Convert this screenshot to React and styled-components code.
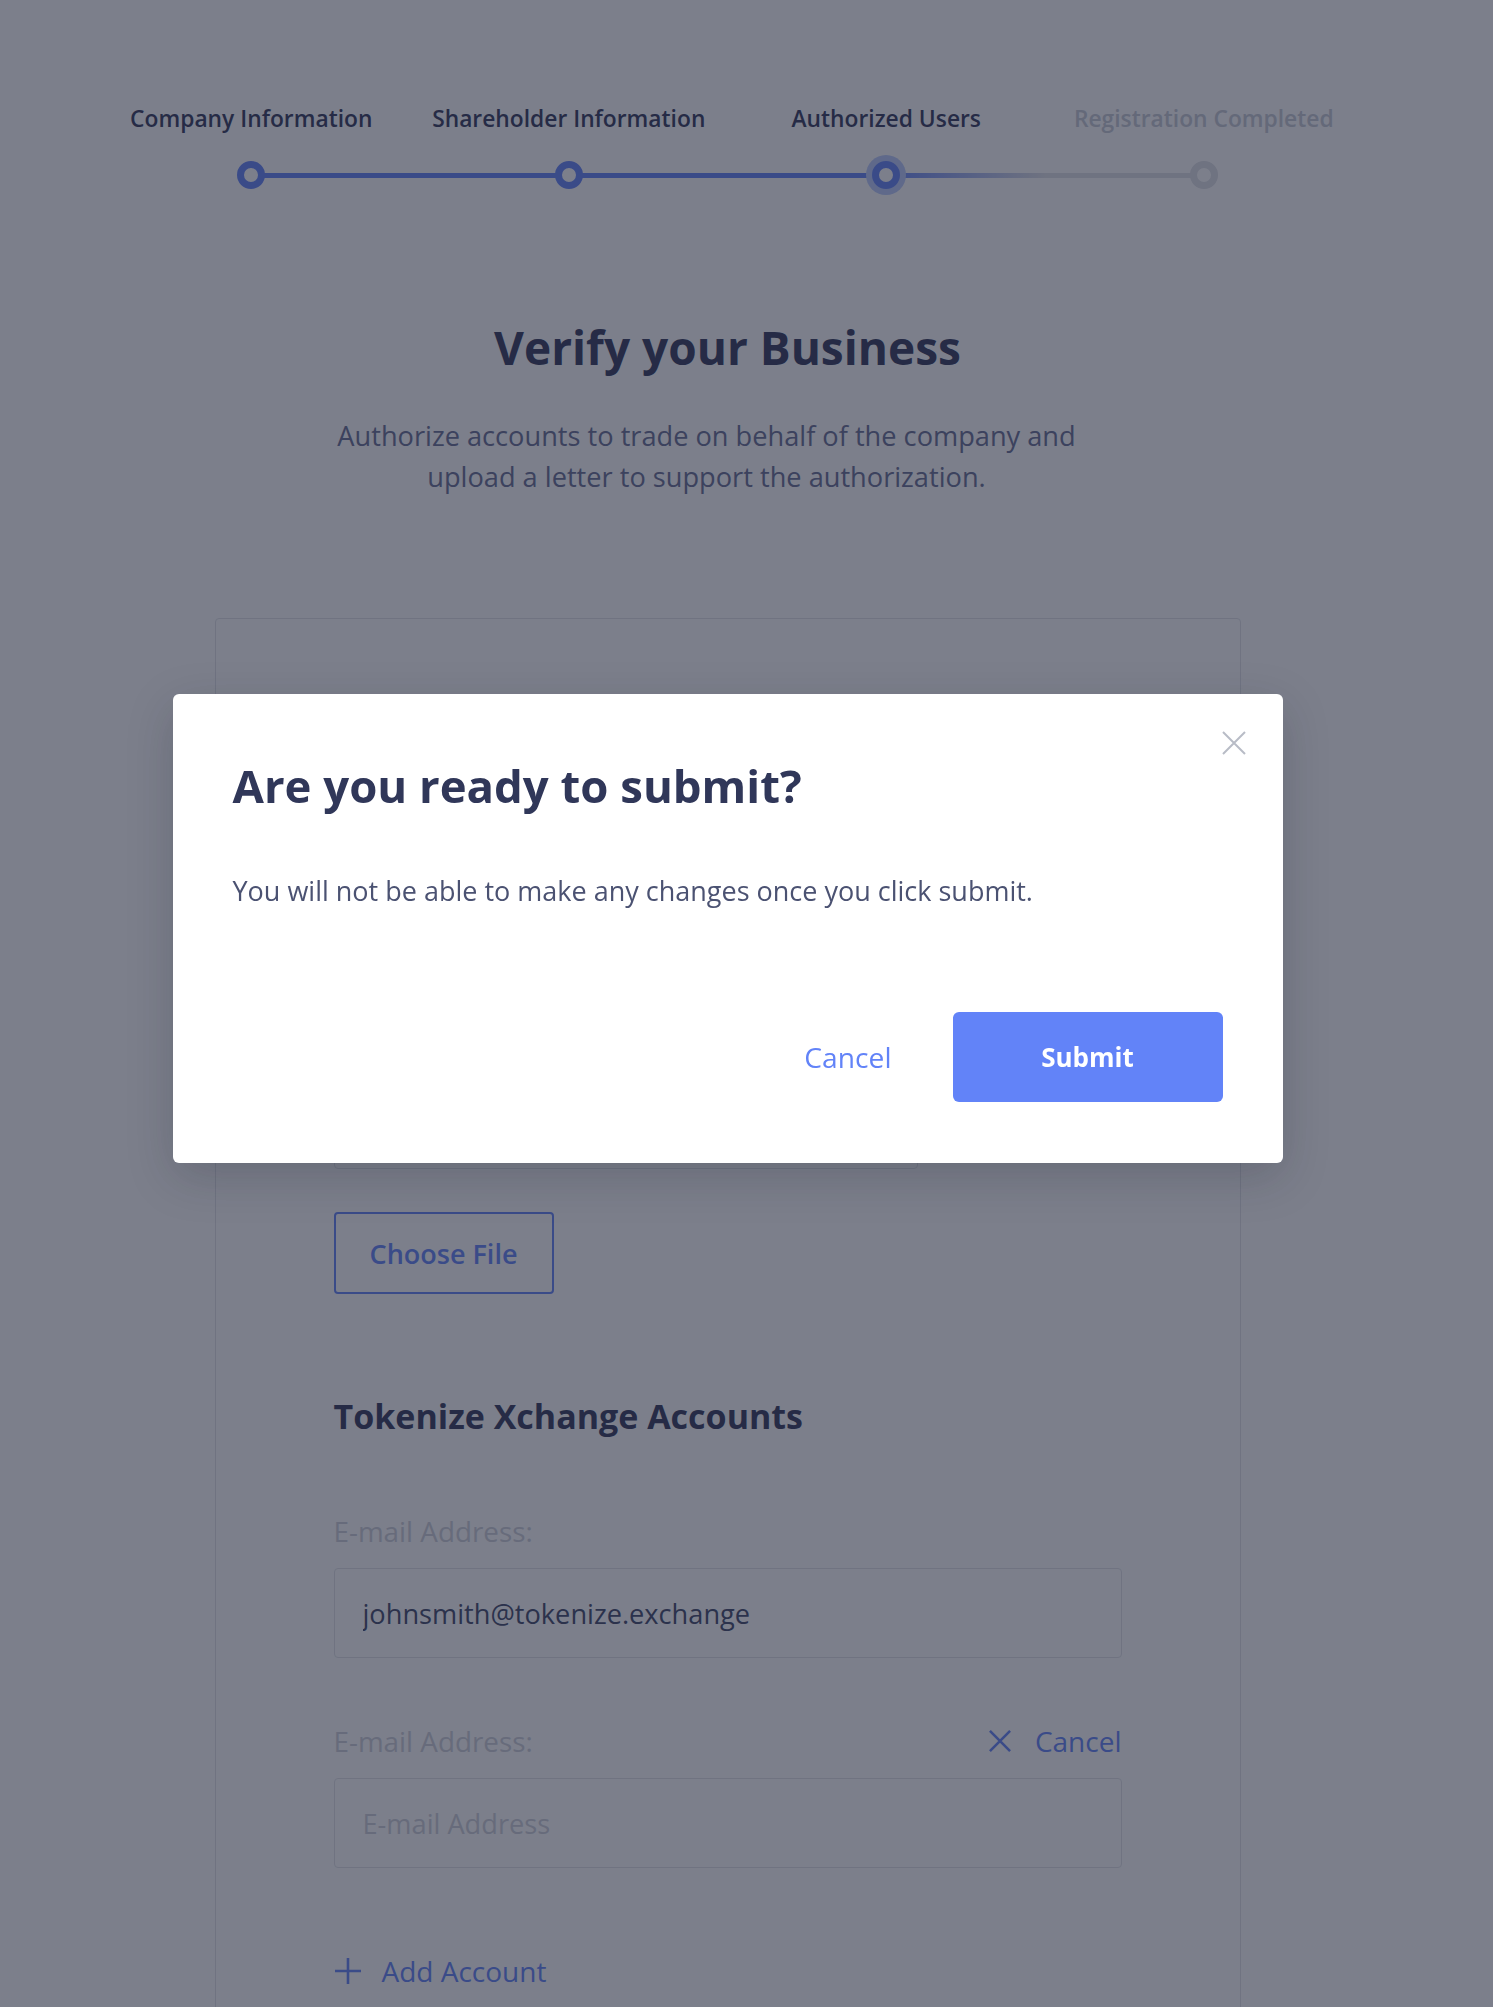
import React from 'react';
import styled, { createGlobalStyle } from 'styled-components';

const palette = {
  navy: '#303759',
  body: '#4b5272',
  sub: '#656c92',
  blue: '#6283f8',
  halo: '#b9cbfc',
  track: '#dfe1e6',
  todo: '#c5c9d4',
  label: '#cdd0d8',
  border: '#e1e3e8',
  input: '#3e4668',
};

const GlobalStyle = createGlobalStyle`
  * {
    box-sizing: border-box;
  }
  body {
    margin: 0;
    background: #fff;
    font-family: 'Open Sans', Lato, sans-serif;
    color: ${palette.navy};
  }
`;

const Page = styled.div`
  width: 1455px;
  padding: 105px 0 0;
  display: flex;
  flex-direction: column;
  align-items: center;
`;

const Steps = styled.ol`
  display: grid;
  grid-template-columns: repeat(4, 317.5px);
  margin: 0;
  padding: 0;
  list-style: none;
`;

const connector = {
  done: palette.blue,
  active: `linear-gradient(to right, ${palette.blue} 0%, ${palette.track} 50%)`,
};

const Step = styled.li`
  position: relative;
  display: flex;
  flex-direction: column;
  align-items: center;
  gap: 28px;
  font-size: 22.8px;
  font-weight: 600;
  line-height: 28px;
  white-space: nowrap;
  color: ${(p) => (p.state === 'todo' ? palette.todo : palette.navy)};

  &::after {
    content: '';
    display: ${(p) => (p.last ? 'none' : 'block')};
    position: absolute;
    top: 67.5px;
    left: 50%;
    width: 100%;
    height: 5px;
    background: ${(p) => connector[p.state] || palette.track};
  }
`;

const Dot = styled.span`
  position: relative;
  z-index: 1;
  width: 28px;
  height: 28px;
  border-radius: 50%;
  background: #fff;
  border: 7px solid ${(p) => (p.state === 'todo' ? palette.track : palette.blue)};
  box-shadow: ${(p) => (p.state === 'active' ? `0 0 0 6px ${palette.halo}` : 'none')};
`;

const Title = styled.h1`
  margin: 130px 0 0;
  font-size: 46px;
  font-weight: 700;
  line-height: 56px;
`;

const Subtitle = styled.p`
  margin: 40px 0 0;
  padding-right: 42px;
  font-size: 27.2px;
  line-height: 41px;
  text-align: center;
  color: ${palette.sub};
`;

const Card = styled.section`
  margin-top: 121px;
  width: 1026px;
  padding: 120px 118px;
  border: 1px solid ${palette.border};
  border-radius: 4px;
  background: #fff;
`;

const FileBox = styled.div`
  margin-top: 340px;
  width: 584px;
  height: 90px;
  border: 1px solid ${palette.border};
  border-radius: 4px;
`;

const SectionTitle = styled.h3`
  margin: 102px 0 0;
  font-size: 34px;
  font-weight: 700;
  line-height: 40px;
  color: ${palette.navy};
`;

const Field = styled.div`
  margin-top: ${(p) => p.top}px;
  display: flex;
  flex-direction: column;
  gap: 21px;
`;

const LabelRow = styled.div`
  display: flex;
  align-items: center;
  justify-content: space-between;
`;

const Label = styled.label`
  font-size: 27.8px;
  font-weight: 500;
  line-height: 32px;
  color: ${palette.label};
`;

const Input = styled.input`
  width: 100%;
  height: 90px;
  padding: 0 28px;
  border: 1px solid ${palette.border};
  border-radius: 4px;
  font-family: inherit;
  font-size: 27.2px;
  color: ${palette.input};
  outline: none;
  &::placeholder {
    color: ${palette.label};
  }
`;

const OutlineButton = styled.button`
  margin-top: 43px;
  width: 220px;
  height: 82px;
  border: 2px solid ${palette.blue};
  border-radius: 4px;
  background: #fff;
  font-family: inherit;
  font-size: 27px;
  font-weight: 600;
  color: ${palette.blue};
`;

const TextLink = styled.button`
  display: flex;
  align-items: center;
  gap: ${(p) => p.gap || 24}px;
  margin-top: ${(p) => p.top || 0}px;
  padding: 0;
  border: none;
  background: none;
  font-family: inherit;
  font-size: 28px;
  font-weight: 500;
  line-height: 32px;
  color: ${palette.blue};
`;

const Backdrop = styled.div`
  position: fixed;
  inset: 0;
  z-index: 10;
  background: rgba(31, 36, 56, 0.585);
  display: flex;
  justify-content: center;
  align-items: flex-start;
  padding: 694px 38px 0 0;
`;

const Modal = styled.div`
  position: relative;
  width: 1110px;
  padding: 63px 60px 61px;
  background: #fff;
  border-radius: 6px;
  box-shadow: 0 14px 48px rgba(20, 24, 40, 0.2);
`;

const Close = styled.button`
  position: absolute;
  top: 37px;
  right: 37px;
  width: 24px;
  height: 24px;
  padding: 0;
  border: none;
  background: none;
  color: #b8bcc6;
  display: flex;
`;

const ModalTitle = styled.h2`
  margin: 0;
  font-size: 45.5px;
  font-weight: 700;
  line-height: 56px;
  color: ${palette.navy};
`;

const ModalText = styled.p`
  margin: 57.5px 0 0;
  font-size: 27px;
  line-height: 40.5px;
  color: ${palette.body};
`;

const Actions = styled.div`
  margin-top: 101px;
  display: flex;
  justify-content: flex-end;
  align-items: center;
  gap: 61px;
`;

const GhostButton = styled.button`
  padding: 0;
  border: none;
  background: none;
  font-family: inherit;
  font-size: 28.2px;
  font-weight: 500;
  color: ${palette.blue};
`;

const PrimaryButton = styled.button`
  width: 270px;
  height: 90px;
  border: none;
  border-radius: 6px;
  background: ${palette.blue};
  font-family: inherit;
  font-size: 26px;
  font-weight: 700;
  color: #fff;
`;

const Cross = ({ size = 24, stroke = 2 }) => (
  <svg width={size} height={size} viewBox="0 0 24 24" fill="none" stroke="currentColor" strokeWidth={stroke}>
    <path d="M1 1L23 23M23 1L1 23" />
  </svg>
);

const Plus = () => (
  <svg width="28" height="28" viewBox="0 0 28 28" fill="none" stroke="currentColor" strokeWidth="2.6">
    <path d="M14 1V27M1 14H27" />
  </svg>
);

const steps = [
  { label: 'Company Information', state: 'done' },
  { label: 'Shareholder Information', state: 'done' },
  { label: 'Authorized Users', state: 'active' },
  { label: 'Registration Completed', state: 'todo' },
];

const App = () => {
  return (
    <>
      <GlobalStyle />
      <Page>
        <Steps>
          {steps.map((s, i) => (
            <Step key={s.label} state={s.state} last={i === steps.length - 1}>
              {s.label}
              <Dot state={s.state} />
            </Step>
          ))}
        </Steps>
        <Title>Verify your Business</Title>
        <Subtitle>
          Authorize accounts to trade on behalf of the company and
          <br />
          upload a letter to support the authorization.
        </Subtitle>
        <Card>
          <FileBox />
          <OutlineButton>Choose File</OutlineButton>
          <SectionTitle>Tokenize Xchange Accounts</SectionTitle>
          <Field top={79}>
            <Label>E-mail Address:</Label>
            <Input defaultValue="johnsmith@tokenize.exchange" readOnly />
          </Field>
          <Field top={67}>
            <LabelRow>
              <Label>E-mail Address:</Label>
              <TextLink>
                <Cross size={22} stroke={2.8} />
                Cancel
              </TextLink>
            </LabelRow>
            <Input placeholder="E-mail Address" readOnly />
          </Field>
          <TextLink top={87} gap={20}>
            <Plus />
            Add Account
          </TextLink>
        </Card>
      </Page>
      <Backdrop>
        <Modal>
          <Close aria-label="Close">
            <Cross />
          </Close>
          <ModalTitle>Are you ready to submit?</ModalTitle>
          <ModalText>You will not be able to make any changes once you click submit.</ModalText>
          <Actions>
            <GhostButton>Cancel</GhostButton>
            <PrimaryButton>Submit</PrimaryButton>
          </Actions>
        </Modal>
      </Backdrop>
    </>
  );
};

export default App;
